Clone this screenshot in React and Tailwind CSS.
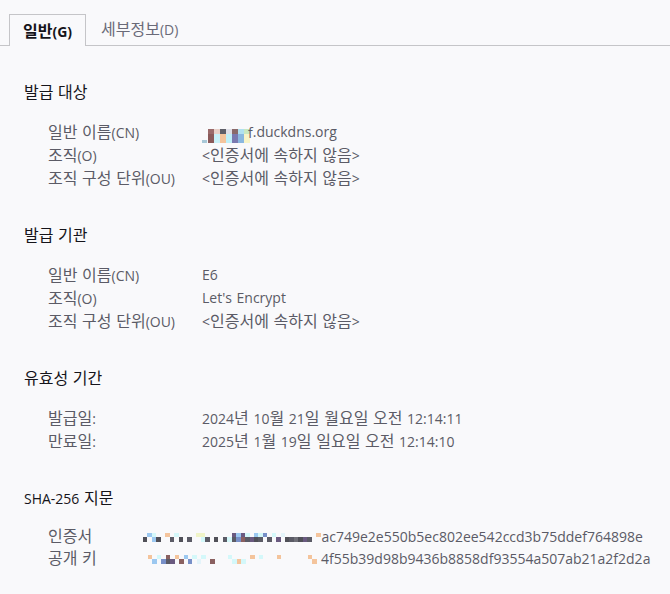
import React from 'react';

const SECTIONS = [
  {
    title: '발급 대상',
    rows: [
      { label: '일반 이름(CN)', value: '.duckdns.org', mask: 'cn' },
      { label: '조직(O)', value: '<인증서에 속하지 않음>' },
      { label: '조직 구성 단위(OU)', value: '<인증서에 속하지 않음>' },
    ],
  },
  {
    title: '발급 기관',
    rows: [
      { label: '일반 이름(CN)', value: 'E6' },
      { label: '조직(O)', value: "Let's Encrypt" },
      { label: '조직 구성 단위(OU)', value: '<인증서에 속하지 않음>' },
    ],
  },
  {
    title: '유효성 기간',
    rows: [
      { label: '발급일:', value: '2024년 10월 21일 월요일 오전 12:14:11' },
      { label: '만료일:', value: '2025년 1월 19일 일요일 오전 12:14:10' },
    ],
  },
];

// redacted pixel blocks, each column = [top, bottom]
const CN_MASK = [
  ['#9a6a6a', '#8a5a5a'], ['#e8d0c8', '#c8f0f8'], ['#5f5f68', '#f4c49c'],
  ['#e0e0e8', '#c0f0f8'], ['#8a6a6a', '#7a7ab0'], ['#b0e0f0', '#8ab8e0'],
  ['#c8e8c0', '#f8f4c8'],
];

const P = {
  g: '#5b5b66', d: '#707078', p: '#6a5a80', b: '#9cc8f0', c: '#d4f8fa', o: '#f4c49c',
  y: '#f0f4c8', r: '#8a6060', u: '#7890c8', l: '#e4f4fa', k: '#505058',
};

const FP1 =
  '.k,b.,cb,.k,..,o.,.g,c.,.k,..,.g,..,y.,yc,.g,..,.k,..,.g,.c,pg,bu,pr,cg,.p,bk,cg,u.,.g,c.,.p,l.,.k,.g,.d,.k,.p,.g,..,o.';
const FP2 =
  'o.,.b,c.,.u,rg,.p,o.,.r,b.,.u,c.,.l,c.,..,.r,..,..,..,c.,.c,.o,.c,..,o.,..,c.,..,..,..,o.,..,..,..,..,..,..,o.,.o,..';

const KO = /([\u1100-\u11ff\u3130-\u318f\uac00-\ud7a3]+)/;

// Korean runs are set a bit larger, as the reference font draws them
function T({ children }) {
  return String(children)
    .split(KO)
    .map((part, i) =>
      KO.test(part) ? (
        <span key={i} className="text-[16px]">
          {part}
        </span>
      ) : (
        part
      )
    );
}

function Mosaic({ code }) {
  return (
    <span className="inline-flex items-end relative top-[1px]">
      {code.split(',').map((pair, i) => (
        <span key={i} className="inline-flex flex-col">
          {[pair[0], pair[1]].map((ch, j) => (
            <span
              key={j}
              className="block w-[4.45px] h-[4.5px]"
              style={{ background: P[ch] || 'transparent' }}
            />
          ))}
        </span>
      ))}
    </span>
  );
}

function CnMask() {
  return (
    <span className="inline-flex items-end relative top-[1px]">
      <span className="block w-[5px] h-[3px] mr-[1px] bg-[#a8c8d8]" />
      {CN_MASK.map((col, i) => (
        <span key={i} className="inline-flex flex-col">
          <span className="block w-[6px] h-[5px]" style={{ background: col[0] }} />
          <span className="block w-[6px] h-[9px]" style={{ background: col[1] }} />
        </span>
      ))}
      <span className="text-[#5b5b66] ml-[-2px]">f</span>
    </span>
  );
}

function Row({ label, value, mask }) {
  return (
    <div className="flex h-[23px] items-center">
      <div className="w-[154px] shrink-0">
        <T>{label}</T>
      </div>
      <div className="flex items-center whitespace-nowrap">
        {mask === 'cn' && <CnMask />}
        <span>
          <T>{value}</T>
        </span>
      </div>
    </div>
  );
}

export default function App() {
  return (
    <div
      className="w-[670px] h-[594px] overflow-hidden bg-[#f9f9fb] text-[14px] text-[#5b5b66] [word-spacing:1px]"
      style={{ fontFamily: '"Open Sans", "Noto Sans CJK KR", sans-serif' }}
    >
      {/* Tabs */}
      <div className="flex items-end pt-[14px] pl-[9px] border-b border-[#c5c5c8] h-[46px]">
        <div className="h-[32px] w-[77px] -mb-px border border-b-0 border-[#c5c5c8] bg-[#f9f9fb] flex items-center justify-center font-bold text-[#15141a]">
          <span>
            <T>일반(G)</T>
          </span>
        </div>
        <div className="h-[32px] pl-[15px] flex items-center text-[#6a6a78]">
          <span>
            <T>세부정보(D)</T>
          </span>
        </div>
      </div>

      <div className="pt-[35px] pl-[24px] flex flex-col gap-[35px]">
        {SECTIONS.map((s) => (
          <section key={s.title}>
            <h3 className="h-[23px] leading-[23px] text-[#15141a] mb-4">
              <T>{s.title}</T>
            </h3>
            <div className="pl-[24px]">
              {s.rows.map((r) => (
                <Row key={r.label} {...r} />
              ))}
            </div>
          </section>
        ))}

        <section>
          <h3 className="h-[23px] leading-[23px] text-[#15141a] mb-4">
            <T>SHA-256 지문</T>
          </h3>
          <div className="pl-[24px] -mt-[1px]">
            <div className="flex h-[22px] items-center">
              <div className="w-[95px] shrink-0">
                <T>인증서</T>
              </div>
              <div className="flex items-center whitespace-nowrap">
                <Mosaic code={FP1} />
                <span className="ml-[1px]">ac749e2e550b5ec802ee542ccd3b75ddef764898e</span>
              </div>
            </div>
            <div className="flex h-[22px] items-center">
              <div className="w-[95px] shrink-0">
                <T>공개 키</T>
              </div>
              <div className="flex items-center whitespace-nowrap">
                <span className="w-[5px]" />
                <Mosaic code={FP2} />
                <span>4f55b39d98b9436b8858df93554a507ab21a2f2d2a</span>
              </div>
            </div>
          </div>
        </section>
      </div>
    </div>
  );
}
